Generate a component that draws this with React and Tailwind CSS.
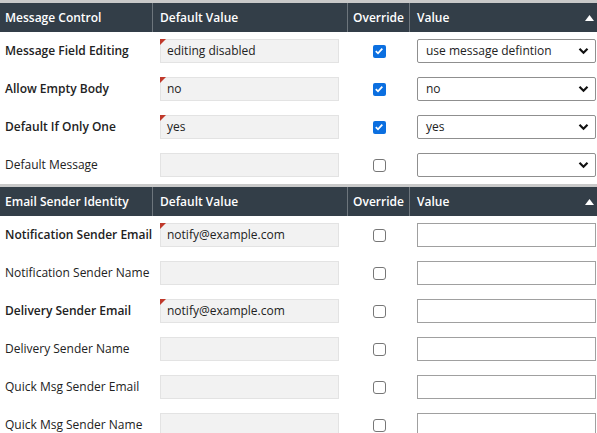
import React from 'react'

const font = { fontFamily: '"Open Sans", "Liberation Sans", sans-serif' }

const sections = [
  {
    title: 'Message Control',
    rows: [
      { label: 'Message Field Editing', bold: true, def: 'editing disabled', mark: true, checked: true, kind: 'select', value: 'use message defintion' },
      { label: 'Allow Empty Body', bold: true, def: 'no', mark: true, checked: true, kind: 'select', value: 'no' },
      { label: 'Default If Only One', bold: true, def: 'yes', mark: true, checked: true, kind: 'select', value: 'yes' },
      { label: 'Default Message', bold: false, def: '', mark: false, checked: false, kind: 'select', value: '' },
    ],
  },
  {
    title: 'Email Sender Identity',
    rows: [
      { label: 'Notification Sender Email', bold: true, def: 'notify@example.com', mark: true, checked: false, kind: 'text' },
      { label: 'Notification Sender Name', bold: false, def: '', mark: false, checked: false, kind: 'text' },
      { label: 'Delivery Sender Email', bold: true, def: 'notify@example.com', mark: true, checked: false, kind: 'text' },
      { label: 'Delivery Sender Name', bold: false, def: '', mark: false, checked: false, kind: 'text' },
      { label: 'Quick Msg Sender Email', bold: false, def: '', mark: false, checked: false, kind: 'text' },
      { label: 'Quick Msg Sender Name', bold: false, def: '', mark: false, checked: false, kind: 'text' },
    ],
  },
]

const cols = 'grid grid-cols-[153px_195px_62px_1fr]'

function Header({ title }) {
  return (
    <div className="border-t-[3px] border-[#c9c9c9]">
      <div className={`${cols} h-[29px] bg-[#333e48] text-white text-[12px] font-semibold`}>
        <div className="flex items-center pl-[5px] border-r border-[#6d757c]">{title}</div>
        <div className="flex items-center pl-[7px] border-r border-[#6d757c]">Default Value</div>
        <div className="flex items-center justify-center border-r border-[#6d757c]">Override</div>
        <div className="flex items-center justify-between pl-[7px] pr-[3px]">
          <span>Value</span>
          <svg width="9" height="6" viewBox="0 0 9 6"><path d="M0 6 L4.5 0 L9 6 Z" fill="#fff" /></svg>
        </div>
      </div>
    </div>
  )
}

function Checkbox({ checked }) {
  if (checked) {
    return (
      <div className="w-[13px] h-[13px] rounded-[2px] bg-[#0b6fe0] flex items-center justify-center">
        <svg width="10" height="10" viewBox="0 0 10 10">
          <path d="M1.8 5.2 L4 7.3 L8.3 2.6" fill="none" stroke="#fff" strokeWidth="1.8" />
        </svg>
      </div>
    )
  }
  return <div className="w-[13px] h-[13px] rounded-[3px] border border-[#777] bg-white" />
}

function Row({ row }) {
  return (
    <div className={`${cols} h-[38px] text-[12px] text-[#222]`}>
      <div className={`flex items-center pl-[5px] whitespace-nowrap ${row.bold ? 'font-semibold' : ''}`}>{row.label}</div>
      <div className="flex items-center pl-[7px]">
        <div className="relative w-[179px] h-[24px] bg-[#f2f2f2] border border-[#e3e3e3] flex items-center pl-[6px]">
          {row.mark && (
            <div className="absolute -top-px -left-px w-0 h-0 border-t-[6px] border-r-[6px] border-t-[#c0392b] border-r-transparent" />
          )}
          {row.def}
        </div>
      </div>
      <div className="flex items-center justify-center">
        <Checkbox checked={row.checked} />
      </div>
      <div className="flex items-center pl-[7px] pr-[2px]">
        {row.kind === 'select' ? (
          <div className="w-[179px] h-[24px] border border-[#8f8f8f] rounded-[2px] bg-white flex items-center justify-between pl-[8px] pr-[6px]">
            <span>{row.value}</span>
            <svg width="11" height="8" viewBox="0 0 11 8">
              <path d="M1.5 1.8 L5.5 5.8 L9.5 1.8" fill="none" stroke="#111" strokeWidth="2.2" />
            </svg>
          </div>
        ) : (
          <div className="w-[179px] h-[24px] border border-[#a0a0a0] bg-white" />
        )}
      </div>
    </div>
  )
}

export default function App() {
  return (
    <div className="w-[597px] h-[433px] overflow-hidden bg-white" style={font}>
      {sections.map(s => (
        <div key={s.title}>
          <Header title={s.title} />
          {s.rows.map(r => <Row key={r.label} row={r} />)}
        </div>
      ))}
    </div>
  )
}
